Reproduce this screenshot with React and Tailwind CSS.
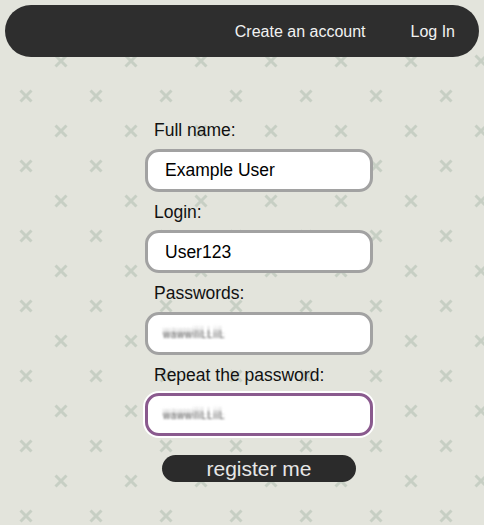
import React from "react";

function Field({ label, value, masked, focused }) {
  return (
    <div className="flex flex-col">
      <label className="ml-[9px] text-[17.5px] leading-[20px] text-[#111]">{label}</label>
      <div
        className={
          "mt-[8.5px] h-[43px] w-[228px] rounded-[14px] border-[3px] bg-white flex items-center pl-[15px] " +
          (focused
            ? "border-[#8a5a8e] shadow-[0_0_0_2px_#ffffff]"
            : "border-[#a2a2a2]")
        }
      >
        {masked ? (
          <span className="mt-[3px] text-[10px] leading-[12px] tracking-[0.6px] text-[#4a4a4a] blur-[0.8px] [text-shadow:0_0_2px_#fff,0_-4px_1px_#c4c4c4]">
            wawwiliLLiiL
          </span>
        ) : (
          <span className="ml-[2px] text-[17.5px] leading-[20px] text-black">{value}</span>
        )}
      </div>
    </div>
  );
}

export default function App() {
  return (
    <div
      className="relative min-h-[525px] w-full overflow-hidden bg-[#e3e4dc]"
      style={{ fontFamily: '"Liberation Sans", Arial, sans-serif' }}
    >
      <svg className="pointer-events-none absolute inset-0 h-full w-full" aria-hidden="true">
        <defs>
          <pattern id="xp" width="70" height="70" patternUnits="userSpaceOnUse">
            <g stroke="#c7cfc4" strokeWidth="3" strokeLinecap="butt">
              <path d="M20.5 20.5 L31.5 31.5 M31.5 20.5 L20.5 31.5" />
              <path d="M55.5 55.5 L66.5 66.5 M66.5 55.5 L55.5 66.5" />
            </g>
          </pattern>
        </defs>
        <rect width="100%" height="100%" fill="url(#xp)" />
      </svg>

      <div className="relative">
        <header className="mx-[5px] mt-[5px] flex h-[52px] items-center justify-end gap-[45px] rounded-full bg-[#2e2e2e] pr-[24px] pt-[2px] text-[16px] text-[#f2f2f2]">
          <span>Create an account</span>
          <span>Log In</span>
        </header>

        <form className="ml-[145px] mt-[63px] flex w-[228px] flex-col gap-[10px]">
          <Field label="Full name:" value="Example User" />
          <Field label="Login:" value="User123" />
          <Field label="Passwords:" masked />
          <Field label="Repeat the password:" masked focused />
          <button
            type="button"
            className="mt-[9px] ml-[17px] h-[27px] w-[194px] rounded-full bg-[#2b2b2b] text-[21px] leading-[27px] text-[#e6e6e6]"
          >
            register me
          </button>
        </form>
      </div>
    </div>
  );
}
